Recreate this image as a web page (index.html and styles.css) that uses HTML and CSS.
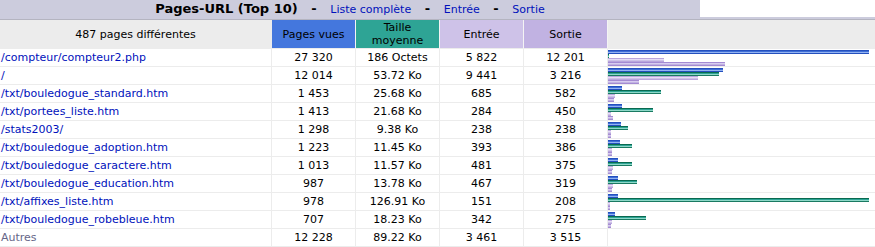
FILE: index.html
```html
<!DOCTYPE html>
<html lang="fr">
<head>
<meta charset="utf-8">
<title>Pages-URL (Top 10)</title>
<link rel="stylesheet" href="styles.css">
</head>
<body>
<div class="section">
  <div class="title-row">
    <div class="title">Pages-URL (Top 10) &nbsp; - &nbsp; <a href="#">Liste complète</a> &nbsp; - &nbsp; <a href="#">Entrée</a> &nbsp; - &nbsp; <a href="#">Sortie</a></div>
    <div class="blank"></div>
  </div>
  <table class="data">
    <colgroup>
      <col class="c-name"><col class="c-num"><col class="c-num"><col class="c-num"><col class="c-num"><col class="c-bars">
    </colgroup>
    <thead>
      <tr>
        <th class="h-name">487 pages différentes</th>
        <th class="h-pages">Pages vues</th>
        <th class="h-size">Taille<br>moyenne</th>
        <th class="h-entry">Entrée</th>
        <th class="h-exit">Sortie</th>
        <th class="h-bars"></th>
      </tr>
    </thead>
    <tbody>
      <tr><td class="url"><a href="#">/compteur/compteur2.php</a></td><td>27 320</td><td>186 Octets</td><td>5 822</td><td>12 201</td>
        <td class="bars"><div class="bar bp" style="width:261px"></div><div class="bar bk" style="width:1px"></div><div class="bar be" style="width:56px"></div><div class="bar bx" style="width:117px"></div></td></tr>
      <tr><td class="url"><a href="#">/</a></td><td>12 014</td><td>53.72 Ko</td><td>9 441</td><td>3 216</td>
        <td class="bars"><div class="bar bp" style="width:115px"></div><div class="bar bk" style="width:111px"></div><div class="bar be" style="width:90px"></div><div class="bar bx" style="width:31px"></div></td></tr>
      <tr><td class="url"><a href="#">/txt/bouledogue_standard.htm</a></td><td>1 453</td><td>25.68 Ko</td><td>685</td><td>582</td>
        <td class="bars"><div class="bar bp" style="width:14px"></div><div class="bar bk" style="width:53px"></div><div class="bar be" style="width:7px"></div><div class="bar bx" style="width:6px"></div></td></tr>
      <tr><td class="url"><a href="#">/txt/portees_liste.htm</a></td><td>1 413</td><td>21.68 Ko</td><td>284</td><td>450</td>
        <td class="bars"><div class="bar bp" style="width:14px"></div><div class="bar bk" style="width:45px"></div><div class="bar be" style="width:3px"></div><div class="bar bx" style="width:5px"></div></td></tr>
      <tr><td class="url"><a href="#">/stats2003/</a></td><td>1 298</td><td>9.38 Ko</td><td>238</td><td>238</td>
        <td class="bars"><div class="bar bp" style="width:13px"></div><div class="bar bk" style="width:20px"></div><div class="bar be" style="width:3px"></div><div class="bar bx" style="width:3px"></div></td></tr>
      <tr><td class="url"><a href="#">/txt/bouledogue_adoption.htm</a></td><td>1 223</td><td>11.45 Ko</td><td>393</td><td>386</td>
        <td class="bars"><div class="bar bp" style="width:12px"></div><div class="bar bk" style="width:24px"></div><div class="bar be" style="width:4px"></div><div class="bar bx" style="width:4px"></div></td></tr>
      <tr><td class="url"><a href="#">/txt/bouledogue_caractere.htm</a></td><td>1 013</td><td>11.57 Ko</td><td>481</td><td>375</td>
        <td class="bars"><div class="bar bp" style="width:10px"></div><div class="bar bk" style="width:24px"></div><div class="bar be" style="width:5px"></div><div class="bar bx" style="width:4px"></div></td></tr>
      <tr><td class="url"><a href="#">/txt/bouledogue_education.htm</a></td><td>987</td><td>13.78 Ko</td><td>467</td><td>319</td>
        <td class="bars"><div class="bar bp" style="width:10px"></div><div class="bar bk" style="width:29px"></div><div class="bar be" style="width:5px"></div><div class="bar bx" style="width:4px"></div></td></tr>
      <tr><td class="url"><a href="#">/txt/affixes_liste.htm</a></td><td>978</td><td>126.91 Ko</td><td>151</td><td>208</td>
        <td class="bars"><div class="bar bp" style="width:10px"></div><div class="bar bk" style="width:261px"></div><div class="bar be" style="width:2px"></div><div class="bar bx" style="width:2px"></div></td></tr>
      <tr><td class="url"><a href="#">/txt/bouledogue_robebleue.htm</a></td><td>707</td><td>18.23 Ko</td><td>342</td><td>275</td>
        <td class="bars"><div class="bar bp" style="width:7px"></div><div class="bar bk" style="width:38px"></div><div class="bar be" style="width:4px"></div><div class="bar bx" style="width:3px"></div></td></tr>
      <tr><td class="url other">Autres</td><td>12 228</td><td>89.22 Ko</td><td>3 461</td><td>3 515</td><td class="bars"></td></tr>
    </tbody>
  </table>
</div>
</body>
</html>
```

FILE: styles.css
```css
html, body {
  margin: 0;
  padding: 0;
  background: #ffffff;
}

body {
  font-family: "DejaVu Sans", Verdana, sans-serif;
  font-size: 11px;
  color: #000000;
}

a {
  color: #0011bb;
  text-decoration: none;
}

.section {
  width: 875px;
  background: #ccccdd;
}

.title-row {
  display: flex;
  height: 17px;
}

.title {
  width: 700px;
  background: #ccccdd;
  font-size: 13px;
  font-weight: bold;
  line-height: 17px;
  text-align: center;
  white-space: nowrap;
}

.title a {
  font-size: 11px;
  font-weight: normal;
}

.blank {
  flex: 1;
  background: #ffffff;
}

.data {
  margin-top: 2px;
  width: 875px;
  table-layout: fixed;
  border-collapse: separate;
  border-spacing: 0;
  border-top: 1px solid #b4b4c0;
  background: #ffffff;
}

.c-name { width: 272px; }
.c-num { width: 84px; }
.c-bars { width: 267px; }

th, td {
  padding: 0;
  border-right: 1px solid #ececec;
  border-bottom: 1px solid #ececec;
  text-align: center;
  font-weight: normal;
  white-space: nowrap;
}

th {
  height: 28px;
  line-height: 13px;
  background: #ececec;
  vertical-align: middle;
  border-right-color: #f4f4f4;
}

th.h-name { border-right-color: #ececec; }
th.h-pages { background: #4477dd; }
th.h-size { background: #2ea495; }
th.h-entry { background: #cec2e8; }
th.h-exit { background: #c1b2e2; }
th.h-bars, td.bars { border-right: none; }

td {
  height: 17px;
  line-height: 17px;
  vertical-align: middle;
}

td.url {
  text-align: left;
  padding-left: 1px;
}

td.other {
  color: #666688;
}

td.bars {
  vertical-align: top;
  padding-top: 1px;
  height: 16px;
  line-height: 0;
}

.bar {
  height: 4px;
}

.bp {
  background: linear-gradient(#2450be 0 1px, #3f6ed6 1px 2px, #93b3f2 2px 3px, #2450be 3px 4px);
}

.bk {
  background: linear-gradient(#0a6a50 0 1px, #2ea495 1px 2px, #8ed8c8 2px 3px, #1a7a62 3px 4px);
}

.be {
  background: linear-gradient(#b9a6dd 0 1px, #e6def5 1px 2px, #cec2e8 2px 3px, #b9a6dd 3px 4px);
}

.bx {
  background: linear-gradient(#a48bd2 0 1px, #d8ccf0 1px 2px, #c1b2e2 2px 3px, #a48bd2 3px 4px);
}
```
